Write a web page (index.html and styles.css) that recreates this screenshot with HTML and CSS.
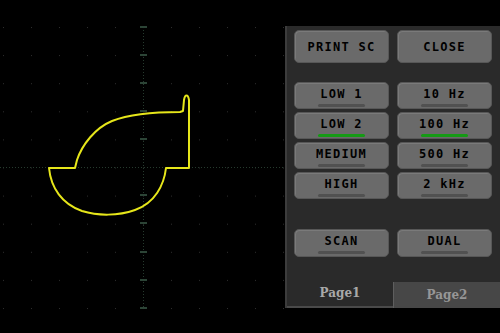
FILE: index.html
```html
<!DOCTYPE html>
<html>
<head>
<meta charset="utf-8">
<link rel="stylesheet" href="styles.css">
</head>
<body>
<div class="screen">
  <div class="scope">
    <svg width="285" height="333" viewBox="0 0 285 333">
      <defs>
        <pattern id="dots" x="3" y="27" width="28" height="28.1" patternUnits="userSpaceOnUse">
          <rect x="-1" y="-1" width="2" height="2" fill="#2e2e2e"/>
        </pattern>
      </defs>
      <rect x="2" y="26" width="283" height="284" fill="url(#dots)"/>
      <line x1="0" y1="167.5" x2="285" y2="167.5" stroke="#263a2e" stroke-width="1" stroke-dasharray="1 2"/>
      <line x1="143.5" y1="27" x2="143.5" y2="309" stroke="#263a2e" stroke-width="1" stroke-dasharray="1 2"/>
      <g stroke="#2c4436" stroke-width="2">
        <line x1="140" y1="27" x2="147" y2="27"/>
        <line x1="140" y1="55" x2="147" y2="55"/>
        <line x1="140" y1="83" x2="147" y2="83"/>
        <line x1="140" y1="111" x2="147" y2="111"/>
        <line x1="140" y1="139" x2="147" y2="139"/>
        <line x1="140" y1="195" x2="147" y2="195"/>
        <line x1="140" y1="223" x2="147" y2="223"/>
        <line x1="140" y1="252" x2="147" y2="252"/>
        <line x1="140" y1="280" x2="147" y2="280"/>
        <line x1="140" y1="308" x2="147" y2="308"/>
      </g>
      <path d="M49,168 L75,168 L77,160 C82,145 95,128 112,121 C130,114 155,112 180,112 L183,111 L184,100 C185,94 188,94 189,100 L189,168 L166,168 C164,185 155,203 135,210 C118,216 98,216 82,211 C62,204 51,188 49,168 Z" fill="none" stroke="#e6e61a" stroke-width="2" stroke-linejoin="round"/>
    </svg>
  </div>
  <div class="panel">
    <div class="content">
      <div class="row top">
        <div class="btn big">PRINT SC</div>
        <div class="btn big">CLOSE</div>
      </div>
      <div class="grid">
        <div class="btn"><span>LOW 1</span><i class="bar"></i></div>
        <div class="btn"><span>10 Hz</span><i class="bar"></i></div>
        <div class="btn"><span>LOW 2</span><i class="bar on"></i></div>
        <div class="btn"><span>100 Hz</span><i class="bar on"></i></div>
        <div class="btn"><span>MEDIUM</span><i class="bar"></i></div>
        <div class="btn"><span>500 Hz</span><i class="bar"></i></div>
        <div class="btn"><span>HIGH</span><i class="bar"></i></div>
        <div class="btn"><span>2 kHz</span><i class="bar"></i></div>
      </div>
      <div class="row bottom">
        <div class="btn tall"><span>SCAN</span><i class="bar"></i></div>
        <div class="btn tall"><span>DUAL</span><i class="bar"></i></div>
      </div>
    </div>
    <div class="tabs">
      <div class="tab active">Page1</div>
      <div class="tab">Page2</div>
    </div>
  </div>
</div>
</body>
</html>
```
FILE: styles.css
```css
html, body {
  margin: 0;
  padding: 0;
  background: #000;
}
.screen {
  width: 500px;
  height: 333px;
  display: flex;
  background: #000;
  overflow: hidden;
}
.scope {
  width: 285px;
  flex: none;
}
.scope svg {
  display: block;
}
.panel {
  width: 215px;
  flex: none;
  margin-top: 26px;
  height: 282px;
  background: #2a2a2a;
  border-left: 2px solid #3c3c3c;
  box-sizing: border-box;
  display: flex;
  flex-direction: column;
}
.content {
  flex: 1;
  padding: 4px 8px 0 7px;
}
.row {
  display: grid;
  grid-template-columns: 95px 95px;
  column-gap: 8px;
}
.grid {
  display: grid;
  grid-template-columns: 95px 95px;
  grid-auto-rows: 27px;
  column-gap: 8px;
  row-gap: 3px;
  margin-top: 19px;
}
.row.bottom {
  margin-top: 30px;
}
.btn {
  box-sizing: border-box;
  background: #6a6a6a;
  border: 1px solid #575757;
  border-radius: 5px;
  box-shadow: inset 1px 1px 0 #7a7a7a;
  color: #000;
  font-family: "DejaVu Sans Mono", "Liberation Mono", monospace;
  font-weight: bold;
  font-size: 12px;
  letter-spacing: 1.3px;
  display: flex;
  flex-direction: column;
  align-items: center;
  justify-content: flex-start;
}
.btn.big {
  height: 33px;
  justify-content: center;
}
.btn span {
  line-height: 14px;
  margin-top: 4px;
}
.btn.tall {
  height: 28px;
}
.bar {
  display: block;
  width: 47px;
  height: 3px;
  border-radius: 2px;
  background: #515151;
  margin-top: 3px;
}
.bar.on {
  background: #159a15;
}
.tabs {
  height: 26px;
  display: flex;
  flex: none;
}
.tab {
  flex: 1;
  box-sizing: border-box;
  font-family: "DejaVu Serif", "Liberation Serif", serif;
  font-weight: bold;
  font-size: 12px;
  color: #969696;
  display: flex;
  align-items: center;
  justify-content: center;
  background: #474747;
  border-left: 1px solid #5e5e5e;
}
.tab.active {
  background: #2a2a2a;
  border-left: none;
  border-bottom: 2px solid #4a4a4a;
  color: #a8a8a8;
  padding-bottom: 2px;
}
```
